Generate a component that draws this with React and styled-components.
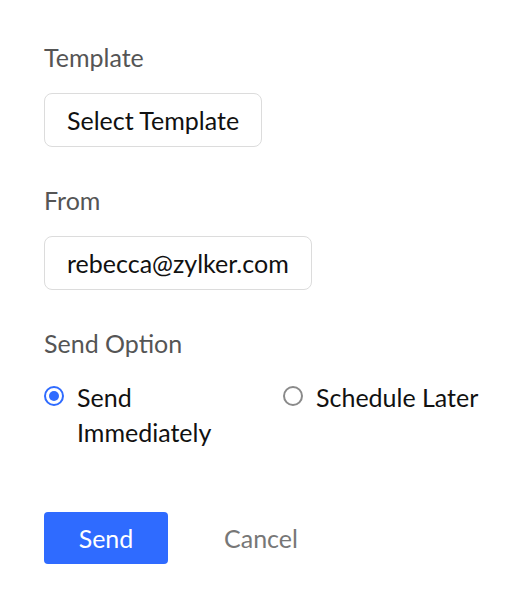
import React, { useState } from "react";
import styled, { createGlobalStyle } from "styled-components";

const Global = createGlobalStyle`
  html, body { margin: 0; padding: 0; background: #fff; }
  body { font-family: Lato, "Noto Sans", sans-serif; }
  * { box-sizing: border-box; }
`;

const Page = styled.div`
  padding: 42px 44px 0 44px;
  display: flex;
  flex-direction: column;
`;

const Field = styled.div`
  display: flex;
  flex-direction: column;
  align-items: flex-start;
  gap: 21px;
  margin-bottom: 38px;
`;

const Label = styled.div`
  font-size: 25px;
  line-height: 30px;
  color: #555;
`;

const Box = styled.div`
  height: 54px;
  padding: 0 22px;
  border: 1px solid #dcdcdc;
  border-radius: 8px;
  display: flex;
  align-items: center;
  font-size: 25px;
  color: #111;
  background: #fff;
`;

const Options = styled.div`
  display: grid;
  grid-template-columns: 200px max-content;
  column-gap: 39px;
  align-items: start;
  margin-top: 1px;
`;

const Option = styled.label`
  display: flex;
  align-items: flex-start;
  gap: 13px;
  font-size: 25px;
  line-height: 35px;
  color: #111;
  cursor: pointer;
`;

const Radio = styled.span`
  flex: none;
  width: 20px;
  height: 20px;
  margin-top: 6px;
  border-radius: 50%;
  border: 2px solid ${(p) => (p.$on ? "#2f6bff" : "#8a8a8a")};
  display: flex;
  align-items: center;
  justify-content: center;
  &::after {
    content: "";
    width: 10px;
    height: 10px;
    border-radius: 50%;
    background: ${(p) => (p.$on ? "#2f6bff" : "transparent")};
  }
`;

const Actions = styled.div`
  display: flex;
  align-items: center;
  gap: 30px;
  margin-top: 24px;
`;

const Primary = styled.button`
  height: 52px;
  width: 124px;
  border: none;
  border-radius: 4px;
  background: #2f6bff;
  color: #fff;
  font-family: inherit;
  font-size: 25px;
`;

const Ghost = styled.button`
  border: none;
  background: none;
  color: #777;
  font-family: inherit;
  font-size: 25px;
  padding: 0 26px;
`;

export default function App() {
  const [opt, setOpt] = useState("now");
  return (
    <>
      <Global />
      <Page>
        <Field>
          <Label>Template</Label>
          <Box>Select Template</Box>
        </Field>
        <Field>
          <Label>From</Label>
          <Box>rebecca@zylker.com</Box>
        </Field>
        <Field>
          <Label>Send Option</Label>
          <Options>
            <Option onClick={() => setOpt("now")}>
              <Radio $on={opt === "now"} />
              <span>Send Immediately</span>
            </Option>
            <Option onClick={() => setOpt("later")}>
              <Radio $on={opt === "later"} />
              <span>Schedule Later</span>
            </Option>
          </Options>
        </Field>
        <Actions>
          <Primary>Send</Primary>
          <Ghost>Cancel</Ghost>
        </Actions>
      </Page>
    </>
  );
}
